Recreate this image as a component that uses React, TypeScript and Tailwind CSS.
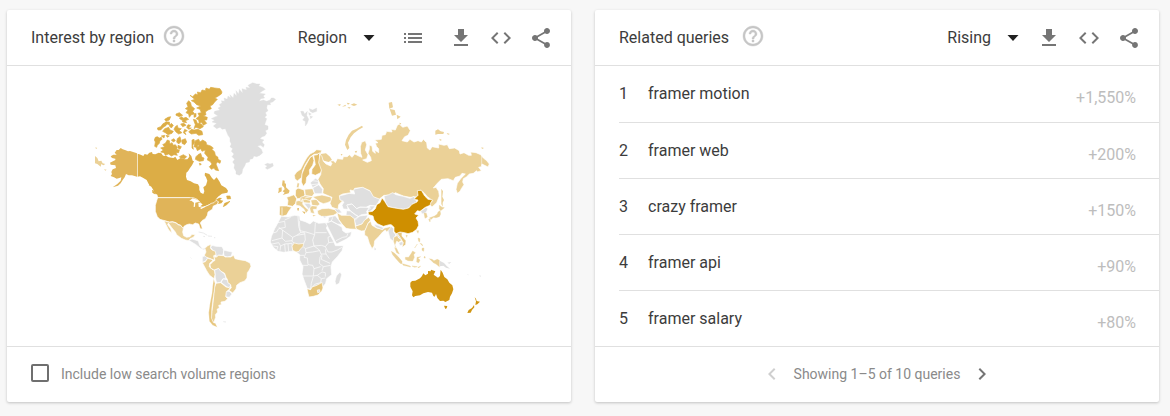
import { useState } from "react";
import type { ReactNode } from "react";

const ICONS = {
  help: "M11 18h2v-2h-2v2zm1-16C6.48 2 2 6.48 2 12s4.48 10 10 10 10-4.48 10-10S17.52 2 12 2zm0 18c-4.41 0-8-3.59-8-8s3.59-8 8-8 8 3.59 8 8-3.59 8-8 8zm0-14c-2.21 0-4 1.79-4 4h2c0-1.1.9-2 2-2s2 .9 2 2c0 2-3 1.75-3 5h2c0-2.25 3-2.5 3-5 0-2.21-1.79-4-4-4z",
  list: "M3 13h2v-2H3v2zm0 4h2v-2H3v2zm0-8h2V7H3v2zm4 4h14v-2H7v2zm0 4h14v-2H7v2zM7 7v2h14V7H7z",
  download: "M19 9h-4V3H9v6H5l7 7 7-7zM5 18v2h14v-2H5z",
  code: "M9.4 16.6L4.8 12l4.6-4.6L8 6l-6 6 6 6 1.4-1.4zm5.2 0l4.6-4.6-4.6-4.6L16 6l6 6-6 6-1.4-1.4z",
  share:
    "M18 16.08c-.76 0-1.44.3-1.96.77L8.91 12.7c.05-.23.09-.46.09-.7s-.04-.47-.09-.7l7.05-4.11c.54.5 1.25.81 2.04.81 1.66 0 3-1.34 3-3s-1.34-3-3-3-3 1.34-3 3c0 .24.04.47.09.7L8.04 9.81C7.5 9.31 6.79 9 6 9c-1.66 0-3 1.34-3 3s1.34 3 3 3c.79 0 1.5-.31 2.04-.81l7.12 4.16c-.05.21-.08.43-.08.65 0 1.61 1.31 2.92 2.92 2.92s2.92-1.31 2.92-2.92-1.31-2.92-2.92-2.92z",
  arrow: "M6.500 9l5.500 6 5.500-6z",
  prev: "M15.41 7.410L14 6l-6 6 6 6 1.410-1.410L10.830 12z",
  next: "M10 6L8.590 7.410 13.170 12l-4.580 4.590L10 18l6-6z",
};

function Icon({ name, className = "" }: { name: keyof typeof ICONS; className?: string }) {
  return (
    <svg viewBox="0 0 24 24" aria-hidden="true" className={`size-6 shrink-0 fill-current ${className}`}>
      <path d={ICONS[name]} />
    </svg>
  );
}

function IconButton({ name, label, className = "text-[#757575]" }: { name: keyof typeof ICONS; label: string; className?: string }) {
  return (
    <button type="button" aria-label={label} className={`cursor-pointer ${className}`}>
      <Icon name={name} />
    </button>
  );
}

function Picker({ label, options }: { label: string; options: string[] }) {
  return (
    <label className="grid grid-cols-[1fr_24px] items-center">
      <select
        aria-label={label}
        className="col-span-2 col-start-1 row-start-1 cursor-pointer appearance-none bg-transparent pr-[34px] text-base leading-6 outline-none [field-sizing:content]"
      >
        {options.map((o) => (
          <option key={o}>{o}</option>
        ))}
      </select>
      <Icon name="arrow" className="pointer-events-none col-start-2 row-start-1 text-[#212121]" />
    </label>
  );
}

function Card({ title, titleGap, tools, footer, children }: { title: string; titleGap: string; tools: ReactNode; footer: ReactNode; children: ReactNode }) {
  return (
    <section className="flex min-w-0 flex-col rounded-xs bg-white shadow-[0_1px_3px_rgba(0,0,0,0.22)]">
      <header className="flex h-14 items-center border-b border-[#e0e0e0] pr-[18px] pl-6">
        <h2 className="text-base leading-6 whitespace-nowrap">{title}</h2>
        <button type="button" aria-label={`Help: ${title}`} className={`mb-1 cursor-pointer text-[#c6c6c6] ${titleGap}`}>
          <Icon name="help" className="stroke-current stroke-[0.4]" />
        </button>
        <div className="ml-auto flex items-center">{tools}</div>
      </header>
      <div className="flex-1">{children}</div>
      <footer className="flex h-14 items-center border-t border-[#e0e0e0] px-6 pb-0.5 text-sm text-[#8a8a8a]">{footer}</footer>
    </section>
  );
}

const C = {
  canada: "#dcad46",
  us: "#e0b459",
  tan: "#ebd197",
  none: "#dfdfdf",
  nordic: "#e5bf6e",
  mid: "#e7c67e",
  china: "#cf8f00",
  oz: "#d19612",
};

function WorldMap() {
  return (
    <svg viewBox="0 0 1212 768" role="img" aria-label="World map of interest by region" className="h-64 w-[404px] max-w-full">
      {/* Northern Canada and Alaska */}
      <g fill={C.canada} stroke={C.canada} strokeWidth="2">
        <path stroke="none" d="M143 233L152 236 160 240 164 234 172 236 178 230 186 228 188 234 196 235 206 230 214 232 218 238 222 240 228 239 236 244 250 246 256 242 262 252 272 246 284 250 292 250 298 242 296 232 304 240 308 254 312 256 306 268 300 276 294 286 289 290 288 302 291 312 302 316 312 322 324 325 328 332 328 342 332 350 340 354 343 346 340 334 348 328 352 314 348 304 344 298 345 290 358 294 366 306 372 312 380 304 388 316 394 328 408 336 414 344 412 350 396 353 384 362 376 372 388 365 396 366 390 372 400 374 394 382 384 384 386 377 378 378 374 388 366 382 360 384 346 390 338 398 328 396 320 376 308 370 298 364 204 364 202 356 194 352 190 342 184 332 176 324 170 312 160 306 150 301 143 302Z" />
        <path d="M196 184L202 182 208 186 214 184 216 190 210 194 208 202 202 208 200 214 194 211 196 198 193 192ZM218 206L226 202 232 192 238 194 240 204 246 200 250 208 256 206 262 214 260 220 268 222 266 230 258 230 262 238 252 236 244 240 236 234 226 238 222 230 212 228 220 222 212 216 224 212ZM244 192L252 188 256 194 250 198ZM262 188L270 182 274 196 266 204 260 198ZM276 192L286 188 290 198 284 206 276 202ZM264 208L274 212 270 220 264 216ZM268 242L280 236 290 242 284 248 272 246ZM222 186L214 180 224 178Z" />
        <path d="M300 58L308 62 316 54 324 56 322 48 332 50 336 42 346 44 348 36 358 40 362 34 374 36 390 38 396 48 394 54 382 62 374 66 382 70 374 78 368 86 360 90 364 98 354 102 346 108 348 116 340 120 352 124 350 132 342 132 350 142 340 148 334 138 328 144 326 132 318 128 328 120 324 112 334 110 330 100 320 96 332 90 320 86 312 78 304 74 314 70Z" />
        <path d="M290 82L296 74 302 80 304 90 314 98 308 106 314 114 304 116 298 124 296 114 288 110 294 102 286 98 294 92ZM312 116L318 112 318 122 312 124ZM310 130L318 132 322 142 334 144 340 152 330 158 318 154 312 158 316 146ZM304 160L312 162 324 160 336 166 338 176 326 178 318 172 304 174 296 168Z" />
        <path d="M276 128L288 124 296 130 286 134 290 140 278 138ZM272 144L282 142 288 148 278 152ZM256 152L262 148 264 156 274 158 268 164 276 170 266 174 258 168 252 160ZM258 114L268 110 278 118 268 122 258 118ZM276 122L280 128 274 132 268 126ZM202 156L212 152 220 142 228 148 220 154 212 162 204 162ZM234 124L242 122 238 132 228 136 224 130ZM226 138L238 138 240 148 232 144 226 150 218 148ZM224 158L236 154 240 162 250 166 246 172 234 176 226 170 218 166ZM244 142L250 148 244 156 238 150ZM228 178L238 180 232 184ZM284 160L292 164 284 168 288 176 280 170ZM294 146L302 148 296 156 304 156 296 160 290 154Z" />
        <path d="M306 192L312 190 314 200 308 208 310 220 306 216ZM316 194L326 190 330 198 338 192 348 198 350 206 362 210 370 216 366 220 374 228 376 238 384 244 384 250 392 254 390 262 382 258 378 264 386 284 376 282 372 276 364 280 358 272 366 264 360 256 352 252 354 244 344 232 346 222 336 226 332 218 322 224 318 214 312 212ZM324 236L332 232 336 244 342 246 340 254 328 256 316 250 318 242ZM322 212L328 210 324 206ZM328 262L334 264 330 268ZM410 360L420 360 422 368 412 369ZM404 382L420 376 410 386 400 392Z" />
        <path d="M180 320L184 330 178 328ZM188 342L196 354 188 350Z" />
      </g>
      <path fill={C.us} d="M141 232L120 225 114 226 105 222 98 220 92 216 86 222 80 222 74 230 80 236 70 236 62 241 66 246 76 248 76 252 60 260 62 266 76 268 78 276 68 280 64 288 66 294 62 300 72 304 80 308 88 306 94 304 92 314 82 324 68 334 84 329 92 322 98 312 104 304 108 294 116 298 126 298 141 302Z" />
      <path fill={C.tan} d="M15 240L22 246 26 256 34 254 38 262 46 264 40 268 34 264 32 272 22 264 15 262ZM16 214L22 216 18 219ZM42 280L50 281 46 284Z" />

      {/* Greenland, Iceland, Svalbard */}
      <g fill={C.none} stroke={C.none}>
        <g transform="translate(330 0)">
          <path d="M34 128L46 122 54 120 42 112 44 106 60 102 54 96 62 92 58 86 66 80 64 74 74 76 72 66 82 70 84 60 92 66 90 56 100 66 102 52 110 60 108 44 116 54 118 40 128 52 126 38 140 42 138 34 150 36 144 28 158 20 170 24 180 24 176 30 188 34 196 40 186 46 178 52 196 54 190 60 194 66 182 68 178 76 190 72 200 76 210 72 214 66 220 66 227 70 218 78 210 80 212 86 202 86 200 96 204 104 196 110 200 118 194 124 200 128 196 140 194 146 204 150 204 160 196 164 200 172 194 180 186 182 180 188 192 192 186 198 193 206 190 214 182 208 172 210 184 220 188 230 180 238 170 242 162 240 158 248 150 250 148 258 138 260 134 270 128 280 126 292 118 298 108 294 108 286 102 276 104 266 98 258 104 250 96 242 102 234 94 226 98 218 90 212 94 204 90 196 90 186 84 178 80 168 76 158 66 160 60 154 50 158 40 150 50 142 36 138 44 132Z" />
        </g>
        <g transform="translate(330 0)">
          <path d="M194 266L202 262 210 264 218 262 220 270 210 276 202 280 196 276 202 270Z" />
        </g>
        <g transform="translate(330 0)">
          <path d="M302 106L310 106 314 114 322 106 320 118 326 130 322 142 316 150 316 136 308 132 314 124 306 118ZM328 98L338 102 350 96 350 106 338 110 330 106ZM330 120L338 122 332 128ZM326 110L334 114 328 118Z" />
        </g>
      </g>

      {/* Americas */}
      <g transform="translate(150 342)">
        <g stroke="#fff" strokeWidth="2" strokeLinejoin="round">
          <path fill={C.us} d="M53 23L160 23 172 28 180 36 182 50 190 52 206 45 214 40 222 38 228 31 235 35 232 43 220 48 217 58 210 62 204 66 202 76 196 86 186 92 181 99 185 108 187 117 181 116 176 102 166 99 158 104 148 102 140 104 132 109 129 116 122 106 114 103 108 98 98 95 88 96 74 92 60 88 52 80 46 64 46 46 50 32Z" />
          <path fill={C.tan} d="M72 92L88 97 98 96 108 99 116 105 122 106 130 116 128 126 131 137 140 142 150 140 156 133 166 134 160 142 150 146 147 152 136 150 124 145 110 134 106 126 96 114 85 99 83 104 92 116 96 130 86 120 78 104Z" />
          <path fill={C.none} d="M146 151L156 147 166 150 175 153 179 166 188 176 199 172 203 176 190 179 180 174 168 164 156 157Z" />
          <path fill={C.none} d="M212 172L216 166 228 169 246 170 252 182 248 196 236 195 230 200 224 186 216 178ZM250 180L262 183 277 186 274 198 262 201 252 198ZM187 200L196 197 203 204 196 214 187 217ZM224 240L236 235 243 244 254 252 258 266 248 267 242 277 230 279 226 264ZM243 277L250 266 263 270 264 278 273 284 270 294 260 290ZM256 304L268 304 276 312 268 322 257 320Z" />
          <path fill={C.tan} d="M203 167L213 163 211 174 216 180 226 184 228 194 221 197 224 211 214 207 200 202 193 196 198 186 195 175Z" />
          <path fill={C.tan} d="M187 218L196 215 203 205 214 208 218 212 209 220 208 230 216 238 223 240 225 254 222 266 208 255 200 242 193 229Z" />
          <path fill={C.tan} d="M222 199L228 202 236 196 250 197 256 201 272 201 281 196 285 206 298 209 316 212 330 219 333 229 328 240 322 248 321 264 314 273 300 278 290 286 288 297 278 309 267 301 274 293 271 283 264 278 262 268 258 262 254 250 242 243 236 235 222 240 212 234 210 224 220 214 225 211Z" />
          <path fill={C.tan} d="M228 280L242 278 258 291 267 293 272 286 268 298 259 305 257 320 263 326 255 334 243 336 244 344 236 346 238 354 231 358 233 366 226 374 227 382 221 398 214 386 216 364 219 340 222 310 224 292Z" />
          <path fill={C.mid} strokeWidth="1" d="M221 266L225 280 222 304 218 330 215 356 214 384 220 398 226 400 232 412 218 406 208 394 206 368 210 340 216 310 218 288Z" />
        </g>
        <path fill="#fff" d="M148 32L158 25 172 29 178 35 172 37 166 38 165 50 161 51 162 38 154 32ZM175 38L184 40 188 44 182 47 181 52 176 50ZM180 54L194 48 196 50 184 57Z" />
        <path stroke={C.none} strokeWidth="2" fill="none" d="M176 126L190 129 202 136M204 138L216 139M222 143L226 143M190 139L195 140M250 395L258 396M152 203L154 205" />
      </g>

      {/* Europe, Africa and western Asia */}
      <g transform="translate(510 192)" stroke="#fff" strokeWidth="2" strokeLinejoin="round">
        <path fill={C.none} d="M64 228L84 231 104 226 119 228 120 240 136 245 150 252 160 243 176 250 196 248 203 256 199 264 212 288 222 306 226 317 250 317 246 332 232 350 217 366 213 380 215 404 200 416 197 430 186 444 150 447 142 446 132 420 126 402 129 380 119 360 119 344 106 334 92 334 72 337 54 334 40 322 31 306 34 290 44 266 54 248Z" />
        <path fill="none" d="M54 248L74 244 76 262 56 266 50 276 34 280M74 240L92 232M56 262L98 292 110 286 122 278 116 260 114 228M118 242L120 272 138 276 164 284 166 248M166 278L200 278M122 278L134 278 136 300 130 312M98 292L96 304 104 310M110 286L134 282M68 270L66 294 36 302M66 294L76 304 96 302M36 312L56 308 62 318 74 312 96 310 98 334M62 318L60 332M74 312L76 336M84 312L86 334M50 330L54 320 40 318M164 284L158 300 162 318 136 326 130 320M162 318L184 316 196 320 206 308 204 292 212 288M196 320L204 336 216 336 232 330 246 322M206 308L222 306M162 318L178 330 184 344 180 352 178 370 190 380 186 392M136 326L138 338 158 336 178 332M138 338L132 352 142 354 144 374 158 376 162 386 182 380M116 346L132 346M124 376L144 376M184 342L198 342 208 356M198 342L196 328M186 346L184 358 210 370M190 380L212 376M162 386L160 408 126 408M160 408L172 406 186 396 196 398 196 410M160 410L154 430 152 446M172 406L184 416 182 428 166 432 156 442M184 416L196 414" />
        <path fill={C.tan} d="M96 318L103 309 116 312 131 310 129 320 122 326 117 334 108 336 98 331Z" />
        <path fill={C.mid} d="M141 446L152 449 156 441 168 437 178 432 186 427 189 444 185 454 174 465 160 469 147 471 144 460Z" />
        <path fill={C.none} d="M172 450L179 449 180 456 173 458ZM229 408L240 396 245 404 238 430 228 435 225 424Z" />
        <path fill={C.none} d="M198 250L214 243 232 253 246 262 248 272 258 279 275 275 272 288 258 298 230 312 224 302 214 282 206 266ZM206 232L226 227 236 240 246 254 232 252 214 243 204 247ZM222 202L238 208 246 218 230 220Z" />
        <path fill="none" d="M218 232L214 243M228 302L248 292 260 290 264 280" />
        <path fill={C.tan} d="M172 212L186 206 206 205 224 209 233 219 220 226 200 229 184 229 174 223Z" />
        <path fill={C.none} d="M238 168L268 160 284 162 280 148 308 141 320 148 332 154 342 170 360 177 354 188 346 198 330 196 318 202 300 201 290 206 276 192 262 194 264 208 250 207 246 196 252 186 238 180Z" />
        <path fill={C.none} d="M260 196L276 192 290 206 300 202 318 202 332 204 320 213 322 222 304 224 296 230 286 224 272 214ZM260 212L272 213 286 224 296 230 286 240 270 228 258 226ZM282 238L298 228 324 225 318 238 306 252 288 258ZM322 212L330 198 346 198 338 208 328 216Z" />
        <path fill={C.tan} d="M231 218L244 226 258 226 270 226 283 236 286 258 290 268 270 267 258 265 246 252 236 238Z" />
        <path fill={C.tan} d="M286 259L306 252 314 240 326 232 332 240 324 250 320 262 314 272 304 273 290 268Z" />
        <path fill={C.none} d="M342 252L352 254 370 264 366 270 346 262Z" />
        <path fill={C.mid} d="M103 106L110 96 122 88 130 72 140 54 150 42 162 36 170 29 185 31 181 41 162 43 150 52 136 74 128 92 125 112 112 123 105 116Z" />
        <path fill={C.nordic} d="M150 53L158 47 162 62 158 76 148 90 149 102 140 112 138 128 130 139 124 126 126 102 134 82Z" />
        <path fill={C.nordic} d="M161 46L172 44 178 38 180 60 188 84 182 98 166 106 155 102 156 88 166 74Z" />
        <path fill={C.tan} stroke="none" d="M182 42L198 40 210 50 216 60 206 66 192 62 184 56Z" />
        <path fill={C.mid} d="M107 150L114 144 132 150 135 165 128 174 112 176 106 166ZM112 128L118 130 116 144 110 142ZM59 198L80 198 95 202 86 214 80 225 66 229 58 224ZM80 172L92 168 102 164 110 176 107 190 98 199 82 196 84 182Z" />
        <path fill={C.tan} d="M134 148L158 146 163 160 156 170 136 167ZM108 184L122 180 130 184 128 192 136 202 146 210 138 220 132 208 120 198 108 196ZM158 170L186 165 212 171 216 182 202 188 190 191 180 187 168 178ZM152 180L170 178 180 193 172 198 156 196ZM122 172L136 167 158 170 152 180 150 190 134 188 118 182ZM148 200L156 197 172 198 170 208 160 208 164 222 152 218Z" />
        <path fill={C.none} d="M158 143L176 134 188 148 186 161 164 161ZM151 128L166 115 176 120 175 134 158 143ZM132 190L148 190 154 198 146 208 138 198Z" />
        <path fill="none" d="M66 202L66 228M124 180L138 178 150 182M134 174L154 170M156 122L174 124M154 134L174 132M126 175L130 184" />
      </g>
      <g transform="translate(510 192)">
        <path fill={C.nordic} d="M68 121L74 122 74 130 78 131 78 142 84 148 89 152 86 160 78 162 68 165 74 158 68 154 74 148 72 142 66 136ZM56 144L65 142 65 154 54 160 56 152ZM112 204L117 204 116 212 112 211ZM126 214L136 216 134 222ZM158 226L168 227 160 229Z" />
        <path fill={C.none} d="M343 322L348 327 345 331ZM190 228L200 231 192 233ZM14 82L18 84Z" />
      </g>

      {/* Russia */}
      <g transform="translate(660 42)" fill={C.tan}>
        <path stroke="#fff" strokeWidth="2" strokeLinejoin="round" d="M30 192L36 200 40 214 48 222 62 228 66 220 60 214 70 212 76 218 82 206 98 208 100 200 112 200 118 194 126 202 134 192 146 198 156 202 152 190 151 170 155 157 166 152 170 164 166 180 174 194 170 206 158 210 172 217 184 212 182 202 174 190 178 178 178 166 186 168 188 184 196 190 194 180 206 188 206 176 200 170 196 160 204 158 194 150 214 148 216 136 226 134 230 124 246 126 244 118 256 120 262 106 268 102 278 112 292 108 301 122 294 136 284 140 276 152 292 156 300 148 312 156 324 152 334 156 340 148 350 158 352 174 360 180 366 170 386 174 386 162 402 166 412 164 418 176 434 174 448 182 450 192 462 188 476 196 484 196 482 186 498 188 512 194 520 204 530 212 538 222 534 231 524 226 516 222 514 230 506 232 514 242 502 246 500 242 490 250 478 252 470 260 460 266 458 276 462 284 454 296 450 304 442 310 438 298 442 280 452 266 466 252 456 250 450 258 436 262 430 272 414 266 394 268 382 280 370 294 378 292 386 304 388 318 380 338 366 351 358 342 368 332 352 320 342 308 332 300 320 320 300 322 280 318 256 308 246 316 222 316 208 327 190 320 180 302 158 292 134 295 130 302 120 300 122 308 98 312 88 317 90 330 98 332 86 344 84 358 66 352 60 340 66 322 50 315 38 310 40 296 30 282 24 268 32 254 34 240 26 218Z" />
        <path d="M112 180L105 164 108 150 116 134 126 122 140 116 156 107 159 112 146 119 132 130 122 142 114 158 118 174ZM236 38L246 36 249 52 238 56ZM239 57L254 60 258 74 246 77ZM260 74L272 80 262 88ZM268 98L274 100 270 104ZM376 122L384 118 392 124 402 126 400 132 384 132 376 134ZM410 129L420 132 414 134ZM388 146L396 150 390 152ZM514 172L522 174 516 177ZM394 296L399 304 397 320 402 330 398 338 398 350 394 342ZM134 184L142 182 138 190ZM92 192L98 192 94 197ZM82 44L92 42 90 48ZM96 50L106 44 108 48ZM110 38L120 40 114 44ZM122 44L132 40 142 44 132 48ZM112 52L122 52 118 56Z" />
        <path fill="none" stroke="#fff" strokeWidth="1.5" d="M515 192V228" />
      </g>

      {/* Eastern Asia and Oceania */}
      <g transform="translate(750 312)">
        <g stroke="#fff" strokeWidth="2" strokeLinejoin="round">
          <path fill={C.tan} d="M74 154L84 130 92 124 96 136 110 144 128 148 134 144 150 140 156 142 148 150 140 156 136 150 128 156 118 168 104 182 102 198 96 206 88 190 82 170 74 166Z" />
          <path fill={C.none} d="M102 133L114 136 130 143 128 149 108 142Z" />
          <path fill={C.none} d="M132 48L146 44 158 38 168 44 190 49 210 55 222 49 226 58 231 66 216 73 206 84 190 88 164 84 144 80 136 66Z" />
          <path fill={C.none} d="M242 94L258 82 264 86 258 98 246 102Z" />
          <path fill={C.none} d="M144 152L154 140 162 146 160 156 168 164 162 174 165 192 158 182 150 176ZM166 164L174 160 184 174 190 184 180 180 176 172ZM176 188L188 184 190 194 180 197Z" />
          <path fill={C.tan} d="M161 172L172 166 176 174 186 180 176 187 170 184 166 196 174 212 166 204 160 184Z" />
          <path fill={C.mid} d="M170 158L186 156 186 168 198 182 197 194 186 202 190 188 180 172Z" />
          <path fill={C.china} d="M84 96L98 94 106 86 110 74 120 68 126 54 134 64 144 80 164 84 190 88 206 84 216 73 231 66 234 60 222 58 234 46 232 32 244 31 254 48 264 58 278 60 272 68 270 76 256 82 240 94 232 92 224 102 236 106 228 114 234 124 236 136 230 148 218 157 204 161 194 158 180 156 168 161 162 154 162 142 154 134 148 134 130 139 112 131 102 120 99 108 86 104Z" />
        </g>
        <g fill={C.tan} stroke={C.tan}>
          <path d="M298 76L306 82 313 83 302 92 298 86ZM300 92L302 102 298 110 288 113 280 112 274 118 268 114 284 108 292 102 294 96ZM266 118L271 118 270 126ZM252 99L259 100 262 111 255 115ZM230 152L236 152 234 160ZM198 166L202 166 200 172Z" />
          <path d="M154 214L164 220 176 232 186 244 186 251 180 250 168 236 158 224ZM187 251L198 254 210 258 212 261 190 256ZM196 232L206 232 214 220 218 213 226 218 221 224 223 232 218 243 204 242 196 238ZM231 232L242 230 234 235 240 240 236 248 230 246ZM234 174L240 176 239 186 236 184ZM240 190L246 192 248 198ZM246 205L252 204 251 214 246 211ZM232 192L224 204ZM164 203L170 206 178 222 170 218ZM254 228L256 234 252 234ZM216 258L232 260 224 262ZM234 262L242 258 236 264ZM268 236L276 238 282 242 292 238 298 241 298 260 288 252 280 248 276 244Z" />
        </g>
        <path fill={C.none} d="M299 242L312 249 320 258 330 266 318 263 310 257 300 259ZM322 248L334 246 328 251ZM338 252L346 258ZM104 206L107 210 104 211ZM382 282L386 285 384 286ZM418 286L424 288 420 290Z" />
        <path fill={C.oz} d="M211 308L216 303 226 302 240 295 246 288 250 280 256 286 264 281 264 273 272 274 273 269 286 274 281 284 294 293 300 288 302 269 308 278 313 291 322 298 328 308 337 316 340 328 336 340 330 350 328 360 316 366 310 362 300 363 292 354 288 342 284 350 280 348 276 338 264 336 250 340 240 346 226 348 220 352 216 346 218 334 211 320ZM312 377L322 378 320 385 316 387ZM404 352L408 356 410 363 420 365 412 373 406 375 408 364ZM402 375L403 382 396 390 392 398 382 399 386 390 396 384Z" />
      </g>
    </svg>
  );
}

const QUERIES = [
  { query: "framer motion", change: "+1,550%" },
  { query: "framer web", change: "+200%" },
  { query: "crazy framer", change: "+150%" },
  { query: "framer api", change: "+90%" },
  { query: "framer salary", change: "+80%" },
];

export default function App() {
  const [lowVolume, setLowVolume] = useState(false);

  return (
    <main className="grid min-h-screen grid-cols-2 items-start gap-6 bg-[#f7f7f7] pt-2.5 pr-[11px] pb-3.5 pl-[7px] font-['Roboto',sans-serif] text-[#3c3c3c]">
      <Card
        title="Interest by region"
        titleGap="ml-2"
        tools={
          <>
            <Picker label="Resolution" options={["Region", "City"]} />
            <div className="mr-6 ml-5 flex">
              <IconButton name="list" label="Show as list" />
            </div>
            <div className="flex gap-4">
              <IconButton name="download" label="Download CSV" />
              <IconButton name="code" label="Embed" />
              <IconButton name="share" label="Share" />
            </div>
          </>
        }
        footer={
          <label className="flex cursor-pointer items-center gap-3">
            <input
              type="checkbox"
              checked={lowVolume}
              onChange={(e) => setLowVolume(e.target.checked)}
              className="mb-0.5 size-[18px] appearance-none rounded-xs border-2 border-[#6f6f6f] checked:bg-[#6f6f6f]"
            />
            Include low search volume regions
          </label>
        }
      >
        <div className="flex h-[280px] items-start justify-center pt-2.5 pl-1.5">
          <WorldMap />
        </div>
      </Card>

      <Card
        title="Related queries"
        titleGap="ml-3"
        tools={
          <>
            <Picker label="Sort by" options={["Rising", "Top"]} />
            <div className="ml-3 flex gap-4">
              <IconButton name="download" label="Download CSV" />
              <IconButton name="code" label="Embed" />
              <IconButton name="share" label="Share" />
            </div>
          </>
        }
        footer={
          <nav aria-label="Pages" className="flex w-full items-center justify-center gap-2.5">
            <IconButton name="prev" label="Previous page" className="text-[#cfcfcf]" />
            <span>Showing 1–5 of 10 queries</span>
            <IconButton name="next" label="Next page" className="text-[#757575]" />
          </nav>
        }
      >
        <ol className="pl-6">
          {QUERIES.map(({ query, change }, i) => (
            <li key={query} className="flex h-14 items-center border-[#e0e0e0] pr-[23px] text-base leading-6 not-first:border-t">
              <span className="w-[29px]">{i + 1}</span>
              <a href="#" className="flex-1">
                {query}
              </a>
              <span className="pt-2 text-[#bdbdbd]">{change}</span>
            </li>
          ))}
        </ol>
      </Card>
    </main>
  );
}
